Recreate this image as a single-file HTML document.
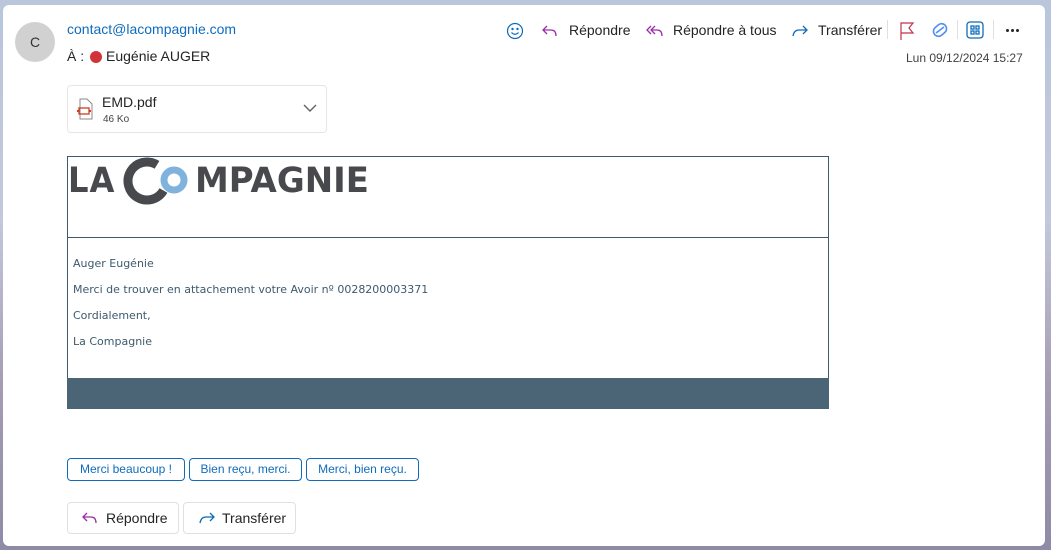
<!DOCTYPE html>
<html><head><meta charset="utf-8"><style>
*{margin:0;padding:0;box-sizing:border-box}
body{width:1051px;height:550px;overflow:hidden;font-family:"Liberation Sans",sans-serif;background:linear-gradient(180deg,#b9c6dc 0%,#c3c8dc 40%,#a59cb4 70%,#8f8aa6 100%);position:relative}
.card{position:absolute;left:3px;top:5px;width:1042px;height:541px;background:#fff;border-radius:6px}
.abs{position:absolute}
.t{position:absolute;white-space:nowrap}
.btn{position:absolute;border:1px solid #0f6cbd;border-radius:4px;color:#0f6cbd;font-size:12px;height:23px;line-height:21px;text-align:center}
.btn2{position:absolute;border:1px solid #e0e0e0;border-radius:4px;color:#242424;font-size:14px;height:32px;line-height:30px}
.body{font-family:"DejaVu Sans",sans-serif;font-size:11px;color:#3d5a6e}
</style></head><body>
<div class="card"></div>
<div class="abs" style="left:15px;top:22px;width:40px;height:40px;border-radius:50%;background:#d1d1d1;color:#333;font-size:14px;line-height:40px;text-align:center">C</div>
<div class="t" style="left:67px;top:21px;font-size:14px;color:#0f6cbd">contact@lacompagnie.com</div>
<div class="t" style="left:67px;top:48px;font-size:14px;color:#242424">À :</div>
<div class="abs" style="left:90px;top:51px;width:12px;height:12px;border-radius:50%;background:#d13438"></div>
<div class="t" style="left:106px;top:48px;font-size:14px;color:#242424">Eugénie AUGER</div>

<!-- toolbar -->
<svg class="abs" style="left:505px;top:21px" width="20" height="20" viewBox="0 0 20 20" fill="none" stroke="#0f6cbd" stroke-width="1.2"><circle cx="10" cy="10" r="7.5"/><circle cx="7.5" cy="8" r=".6" fill="#0f6cbd"/><circle cx="12.5" cy="8" r=".6" fill="#0f6cbd"/><path d="M6.5 11.5q3.5 3.5 7 0"/></svg>
<svg class="abs" style="left:540px;top:21px" width="20" height="20" viewBox="0 0 20 20" fill="none" stroke="#9c2da8" stroke-width="1.3"><path d="M7 5L3 9l4 4M3 9h8q5 0 5 6"/></svg>
<div class="t" style="left:569px;top:22px;font-size:14px;color:#242424">Répondre</div>
<svg class="abs" style="left:645px;top:21px" width="22" height="20" viewBox="0 0 22 20" fill="none" stroke="#9c2da8" stroke-width="1.3"><path d="M6 5L2 9l4 4M10 5L6 9l4 4M6 9h6q5 0 5 6"/></svg>
<div class="t" style="left:673px;top:22px;font-size:14px;color:#242424">Répondre à tous</div>
<svg class="abs" style="left:790px;top:21px" width="20" height="20" viewBox="0 0 20 20" fill="none" stroke="#0f6cbd" stroke-width="1.3"><path d="M13 5l4 4-4 4M17 9H9q-5 0-6 6"/></svg>
<div class="t" style="left:818px;top:22px;font-size:14px;color:#242424">Transférer</div>
<div class="abs" style="left:887px;top:20px;width:1px;height:19px;background:#e0e0e0"></div>
<svg class="abs" style="left:897px;top:20px" width="20" height="22" viewBox="0 0 20 22" fill="none" stroke="#c4314b" stroke-width="1.2"><path d="M4 20V3h12l-4 5 4 5H4"/></svg>
<svg class="abs" style="left:929px;top:19px" width="22" height="22" viewBox="0 0 22 22" fill="none" stroke="#4f8ef7" stroke-width="1.6"><rect x="4" y="6" width="14" height="10" rx="5" transform="rotate(-40 11 11)"/><path d="M7 14l8-6"/></svg>
<div class="abs" style="left:957px;top:20px;width:1px;height:19px;background:#e0e0e0"></div>
<svg class="abs" style="left:965px;top:20px" width="20" height="20" viewBox="0 0 20 20" fill="none" stroke="#0f6cbd" stroke-width="1.3"><rect x="2" y="2" width="16" height="16" rx="3"/><rect x="6" y="6" width="3" height="3"/><rect x="11" y="6" width="3" height="3"/><rect x="6" y="11" width="3" height="3"/><rect x="11" y="11" width="3" height="3"/></svg>
<div class="abs" style="left:993px;top:20px;width:1px;height:19px;background:#e0e0e0"></div>
<div class="abs" style="left:1006px;top:29px;width:3px;height:3px;background:#242424;border-radius:50%"></div>
<div class="abs" style="left:1011px;top:29px;width:3px;height:3px;background:#242424;border-radius:50%"></div>
<div class="abs" style="left:1016px;top:29px;width:3px;height:3px;background:#242424;border-radius:50%"></div>
<div class="t" style="left:906px;top:51px;font-size:12px;color:#424242">Lun 09/12/2024 15:27</div>

<!-- attachment -->
<div class="abs" style="left:67px;top:85px;width:260px;height:48px;border:1px solid #e6e6e6;border-radius:4px"></div>
<svg class="abs" style="left:76px;top:98px" width="18" height="22" viewBox="0 0 18 22" fill="none"><path d="M4 1h7l5 5v15H4z" stroke="#888" stroke-width="1"/><rect x="3" y="10" width="10" height="6" stroke="#d13b1f" stroke-width="1.3"/><rect x="1" y="12" width="2" height="2" fill="#d13b1f"/><rect x="13" y="12" width="2" height="2" fill="#d13b1f"/></svg>
<div class="t" style="left:102px;top:94px;font-size:14px;color:#242424">EMD.pdf</div>
<div class="t" style="left:103px;top:114px;font-size:10px;color:#424242">46 Ko</div>
<svg class="abs" style="left:302px;top:102px" width="16" height="12" viewBox="0 0 16 12" fill="none" stroke="#616161" stroke-width="1.4"><path d="M2 3l6 6 6-6"/></svg>

<!-- email body -->
<div class="abs" style="left:67px;top:156px;width:762px;height:253px;border:1px solid #3d5a6e"></div>
<div class="abs" style="left:67px;top:237px;width:762px;height:1px;background:#3d5a6e"></div>
<div class="abs" style="left:67px;top:378px;width:762px;height:31px;background:#4b6577"></div>
<div class="t" style="left:68px;top:161px;font-family:'DejaVu Sans',sans-serif;font-weight:bold;font-size:35px;color:#48494d;letter-spacing:1px;transform:scaleX(0.92);transform-origin:left">LA</div>
<svg class="abs" style="left:123px;top:157px" width="50" height="48" viewBox="0 0 50 48"><circle cx="24" cy="24" r="19" fill="none" stroke="#48494d" stroke-width="9" stroke-dasharray="90 30" transform="rotate(30 24 24)"/></svg>
<svg class="abs" style="left:160px;top:166px" width="28" height="28" viewBox="0 0 28 28"><circle cx="14" cy="14" r="10" fill="none" stroke="#7fb2dd" stroke-width="7"/></svg>
<div class="t" style="left:195px;top:161px;font-family:'DejaVu Sans',sans-serif;font-weight:bold;font-size:35px;color:#48494d;letter-spacing:0px;transform:scaleX(0.97);transform-origin:left">MPAGNIE</div>
<div class="t body" style="left:73px;top:257px">Auger Eugénie</div>
<div class="t body" style="left:73px;top:283px">Merci de trouver en attachement votre Avoir nº 0028200003371</div>
<div class="t body" style="left:73px;top:309px">Cordialement,</div>
<div class="t body" style="left:73px;top:335px">La Compagnie</div>

<!-- quick replies -->
<div class="btn" style="left:67px;top:458px;width:118px">Merci beaucoup !</div>
<div class="btn" style="left:189px;top:458px;width:113px">Bien reçu, merci.</div>
<div class="btn" style="left:306px;top:458px;width:113px">Merci, bien reçu.</div>
<div class="btn2" style="left:67px;top:502px;width:112px"></div>
<svg class="abs" style="left:80px;top:508px" width="20" height="20" viewBox="0 0 20 20" fill="none" stroke="#9c2da8" stroke-width="1.3"><path d="M7 5L3 9l4 4M3 9h8q5 0 5 6"/></svg>
<div class="t" style="left:106px;top:510px;font-size:14px;color:#242424">Répondre</div>
<div class="btn2" style="left:183px;top:502px;width:113px"></div>
<svg class="abs" style="left:197px;top:508px" width="20" height="20" viewBox="0 0 20 20" fill="none" stroke="#0f6cbd" stroke-width="1.3"><path d="M13 5l4 4-4 4M17 9H9q-5 0-6 6"/></svg>
<div class="t" style="left:222px;top:510px;font-size:14px;color:#242424">Transférer</div>
</body></html>
